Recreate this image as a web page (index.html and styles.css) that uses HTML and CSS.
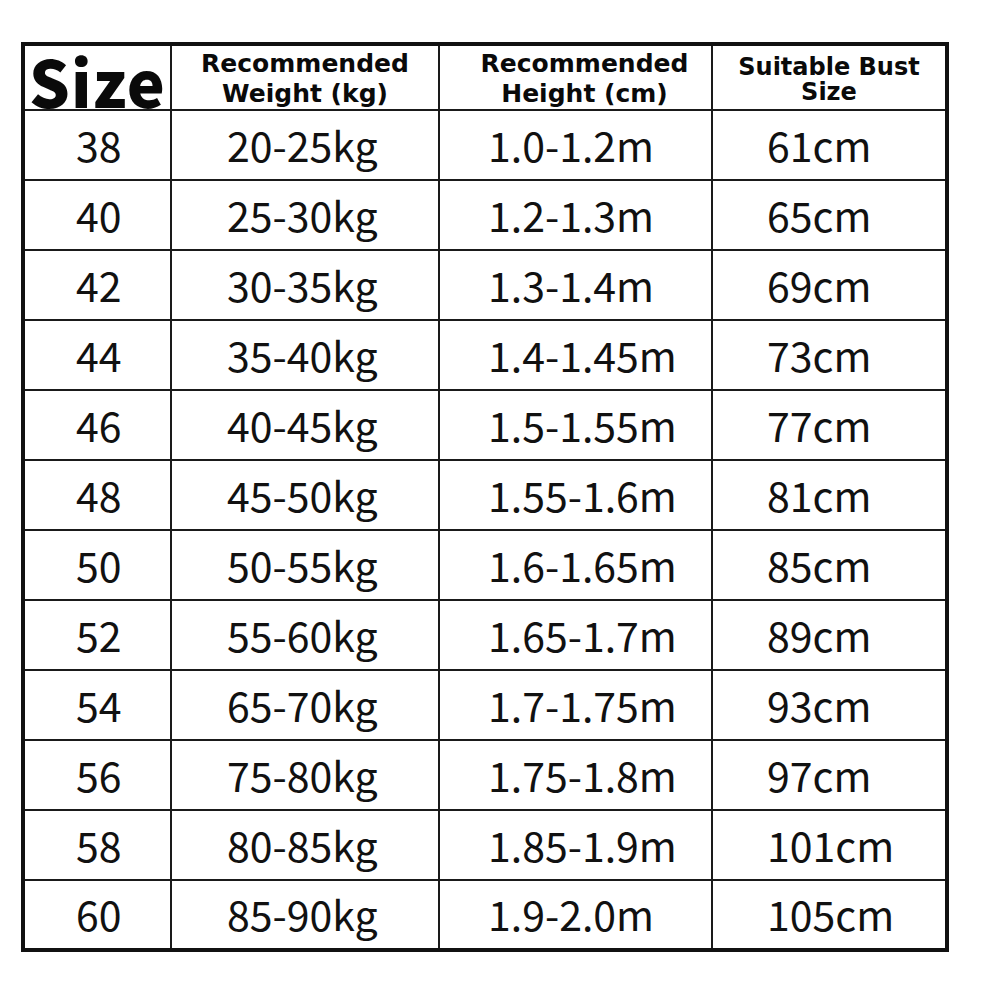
FILE: index.html
```html
<!DOCTYPE html>
<html>
<head>
<meta charset="utf-8">
<link rel="stylesheet" href="styles.css">
</head>
<body>
<div class="chart">
  <div class="cell head size-head">Size</div>
  <div class="cell head sub">Recommended<br>Weight (kg)</div>
  <div class="cell head sub shift">Recommended<br>Height (cm)</div>
  <div class="cell head sub tight endcol">Suitable Bust<br>Size</div>

  <div class="cell d c1">38</div><div class="cell d c2">20-25kg</div><div class="cell d c3">1.0-1.2m</div><div class="cell d c4 endcol">61cm</div>
  <div class="cell d c1">40</div><div class="cell d c2">25-30kg</div><div class="cell d c3">1.2-1.3m</div><div class="cell d c4 endcol">65cm</div>
  <div class="cell d c1">42</div><div class="cell d c2">30-35kg</div><div class="cell d c3">1.3-1.4m</div><div class="cell d c4 endcol">69cm</div>
  <div class="cell d c1">44</div><div class="cell d c2">35-40kg</div><div class="cell d c3">1.4-1.45m</div><div class="cell d c4 endcol">73cm</div>
  <div class="cell d c1">46</div><div class="cell d c2">40-45kg</div><div class="cell d c3">1.5-1.55m</div><div class="cell d c4 endcol">77cm</div>
  <div class="cell d c1">48</div><div class="cell d c2">45-50kg</div><div class="cell d c3">1.55-1.6m</div><div class="cell d c4 endcol">81cm</div>
  <div class="cell d c1">50</div><div class="cell d c2">50-55kg</div><div class="cell d c3">1.6-1.65m</div><div class="cell d c4 endcol">85cm</div>
  <div class="cell d c1">52</div><div class="cell d c2">55-60kg</div><div class="cell d c3">1.65-1.7m</div><div class="cell d c4 endcol">89cm</div>
  <div class="cell d c1">54</div><div class="cell d c2">65-70kg</div><div class="cell d c3">1.7-1.75m</div><div class="cell d c4 endcol">93cm</div>
  <div class="cell d c1">56</div><div class="cell d c2">75-80kg</div><div class="cell d c3">1.75-1.8m</div><div class="cell d c4 endcol">97cm</div>
  <div class="cell d c1">58</div><div class="cell d c2">80-85kg</div><div class="cell d c3">1.85-1.9m</div><div class="cell d c4 endcol">101cm</div>
  <div class="cell d c1 lastrow">60</div><div class="cell d c2 lastrow">85-90kg</div><div class="cell d c3 lastrow">1.9-2.0m</div><div class="cell d c4 endcol lastrow">105cm</div>
</div>
</body>
</html>
```

FILE: styles.css
```css
html, body {
  margin: 0;
  padding: 0;
  background: #ffffff;
}

.chart {
  margin: 42px 0 0 21px;
  width: 920px;
  border: 4px solid #111;
  display: grid;
  grid-template-columns: 147px 268px 273px 232px;
  grid-template-rows: 65px repeat(11, 70px) 67px;
  color: #111;
}

.cell {
  border-right: 2px solid #1a1a1a;
  border-bottom: 2px solid #1a1a1a;
  display: flex;
  align-items: center;
  box-sizing: border-box;
}

.endcol {
  border-right: none;
}

.lastrow {
  border-bottom: none;
}

.head {
  justify-content: center;
  text-align: center;
  color: #0a0a0a;
}

.size-head {
  font-family: "Noto Sans CJK SC", "Noto Sans", sans-serif;
  font-weight: 900;
  font-size: 64px;
  line-height: 56px;
  padding-top: 4px;
  letter-spacing: 1px;
}

.sub {
  font-family: "DejaVu Sans", sans-serif;
  font-weight: bold;
  font-size: 25px;
  line-height: 30px;
  padding-top: 2px;
}

.shift {
  padding-left: 18px;
}

.tight {
  font-size: 24px;
  line-height: 25px;
  padding-top: 4px;
}

.d {
  font-family: "Noto Sans CJK SC", "Noto Sans", sans-serif;
  font-size: 41px;
  line-height: 1;
  font-weight: 400;
  padding-bottom: 2px;
}

.c1 { padding-left: 51px; }
.c2 { padding-left: 55px; }
.c3 { padding-left: 48px; }
.c4 { padding-left: 54px; }
```
